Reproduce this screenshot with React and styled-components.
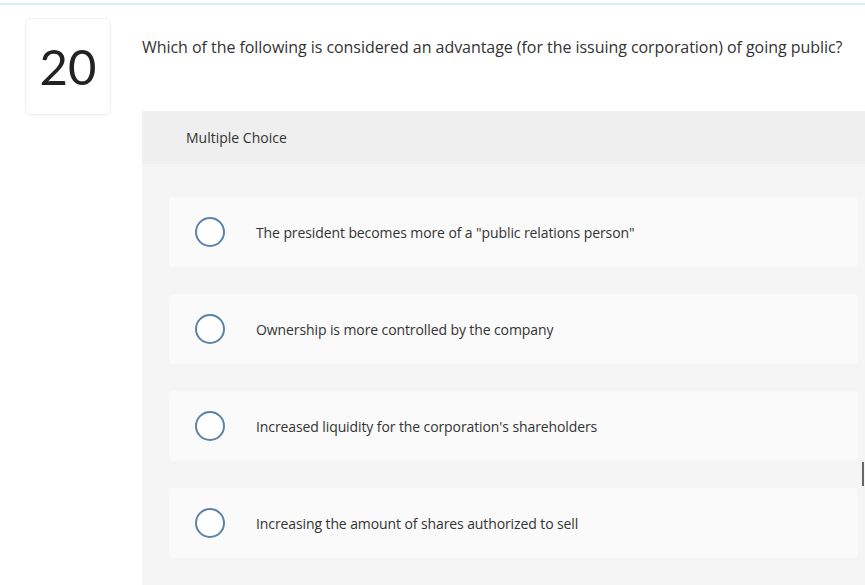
import React from "react";
import styled, { createGlobalStyle } from "styled-components";

const options = [
    'The president becomes more of a "public relations person"',
    "Ownership is more controlled by the company",
    "Increased liquidity for the corporation's shareholders",
    "Increasing the amount of shares authorized to sell",
];

export default function App() {
    return (
        <>
            <GlobalStyle />
            <TopLine />
            <Main>
                <NumberBox>20</NumberBox>
                <Content>
                    <Question>
                        Which of the following is considered an advantage (for the issuing
                        corporation) of going public?
                    </Question>
                    <Panel>
                        <PanelHeader>Multiple Choice</PanelHeader>
                        <PanelBody>
                            {options.map((text) => (
                                <OptionCard key={text}>
                                    <Radio />
                                    <OptionText>{text}</OptionText>
                                </OptionCard>
                            ))}
                        </PanelBody>
                    </Panel>
                </Content>
            </Main>
            <Cursor />
        </>
    );
}

const GlobalStyle = createGlobalStyle`
    html, body {
        margin: 0;
        background: #fff;
        overflow: hidden;
        font-family: "Open Sans", Lato, sans-serif;
        color: #333;
    }
`;

const TopLine = styled.div`
    height: 2px;
    margin-top: 3px;
    background: #d4ebfa;
`;

const Main = styled.div`
    display: flex;
    align-items: flex-start;
    padding-top: 13px;
`;

const NumberBox = styled.div`
    flex: none;
    width: 84px;
    height: 93px;
    margin-left: 25px;
    border: 1px solid #efefef;
    border-radius: 6px;
    box-shadow: 0 1px 2px rgba(0, 0, 0, 0.04);
    display: flex;
    align-items: center;
    justify-content: center;
    font-family: Lato, sans-serif;
    font-size: 49px;
    color: #222;
    padding-bottom: 2px;
    box-sizing: content-box;
`;

const Content = styled.div`
    margin-left: 31px;
    width: 743px;
    flex: none;
`;

const Question = styled.div`
    margin-top: 19px;
    font-size: 16px;
    line-height: 20px;
    letter-spacing: -0.05px;
    color: #333;
    white-space: nowrap;
`;

const Panel = styled.div`
    margin-top: 54px;
`;

const PanelHeader = styled.div`
    height: 53px;
    background: #efefef;
    display: flex;
    align-items: center;
    padding-left: 44px;
    font-size: 14px;
    color: #333;
`;

const PanelBody = styled.div`
    background: #f5f5f5;
    padding: 33px 27px 40px;
    display: flex;
    flex-direction: column;
    gap: 27px;
`;

const OptionCard = styled.div`
    height: 70px;
    background: #fafafa;
    border-radius: 4px;
    display: flex;
    align-items: center;
    padding-left: 26px;
    gap: 31px;
`;

const Radio = styled.span`
    flex: none;
    width: 26px;
    height: 26px;
    border: 2px solid #5c82a8;
    border-radius: 50%;
    background: #fff;
`;

const OptionText = styled.span`
    font-size: 14px;
    letter-spacing: -0.1px;
    color: #333;
`;

const Cursor = styled.div`
    position: absolute;
    left: 862px;
    top: 462px;
    width: 2px;
    height: 24px;
    background: #666;
`;
